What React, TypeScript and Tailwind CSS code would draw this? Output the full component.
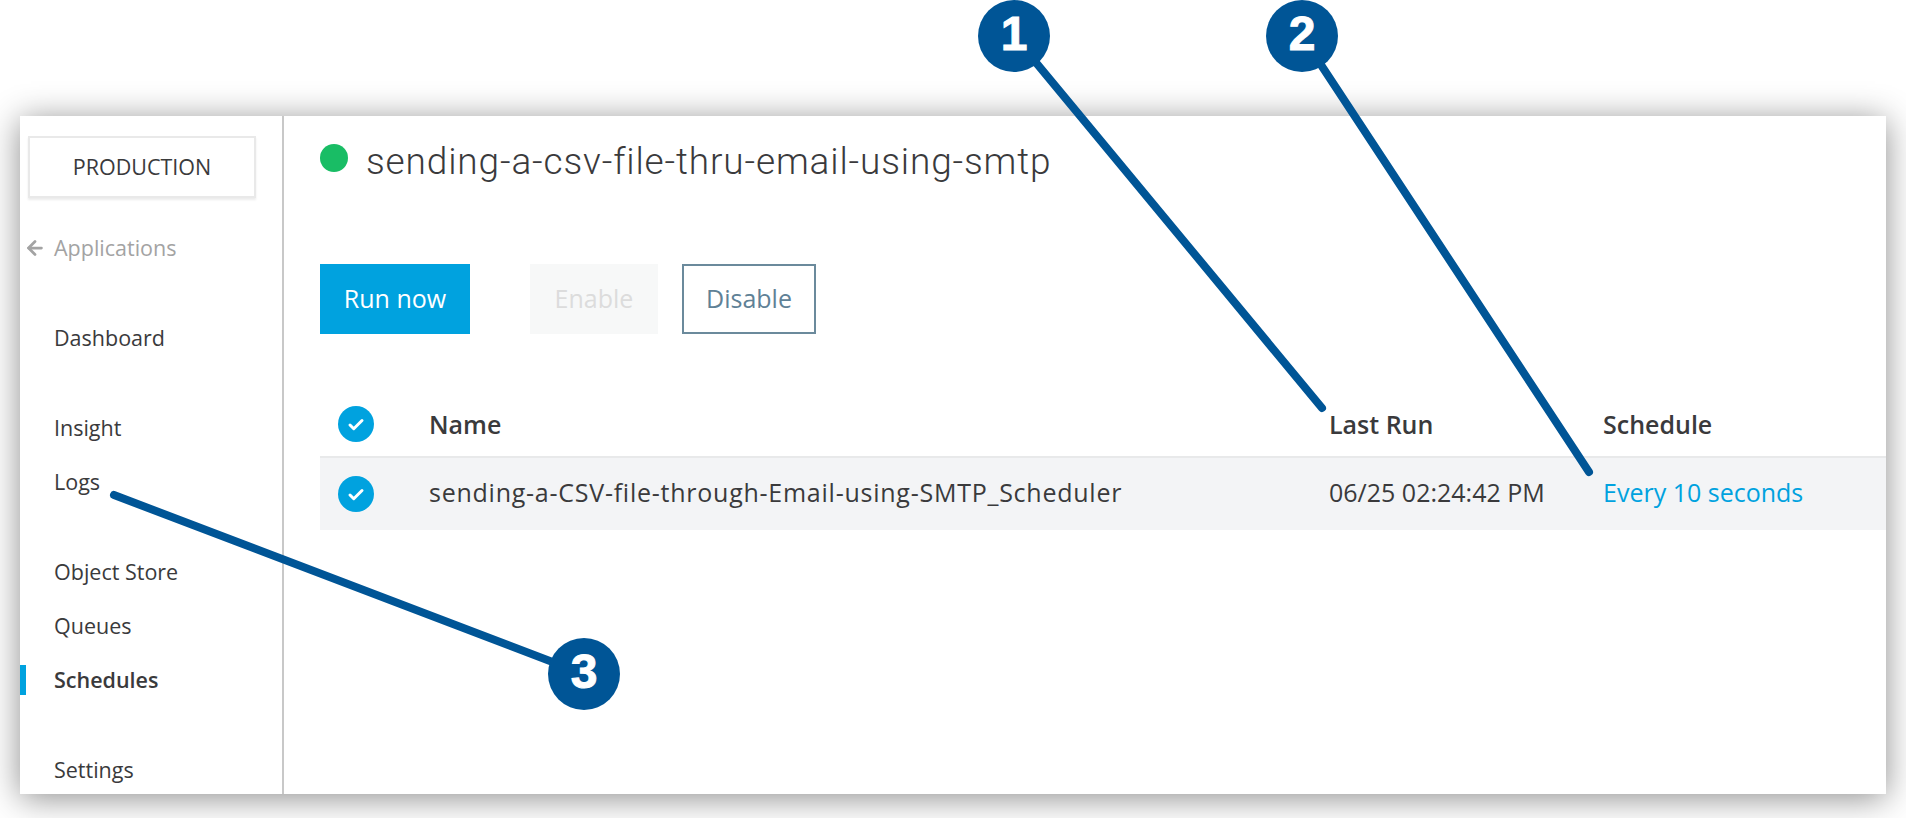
import { Check, ArrowLeft } from 'lucide-react'

const callouts = [
  { n: '1', cx: 1014, cy: 36, x2: 1322, y2: 408 },
  { n: '2', cx: 1302, cy: 36, x2: 1589, y2: 472 },
  { n: '3', cx: 584, cy: 674, x2: 114, y2: 495 },
]

function NavItem({ label }: { label: string }) {
  return (
    <div className="h-[54px] flex items-center pl-[34px] text-[21.5px] text-[#3a3a3c]">
      {label}
    </div>
  )
}

function RoundCheck() {
  return (
    <div className="w-9 h-9 rounded-full bg-[#00a2df] flex items-center justify-center">
      <Check className="w-[18px] h-[18px] text-white mt-0.5" strokeWidth={4} />
    </div>
  )
}

export default function App() {
  return (
    <div className="relative w-[1906px] h-[818px] overflow-hidden bg-white pt-[116px] pl-[20px] font-['Open_Sans',sans-serif]">
      <div className="flex w-[1866px] h-[678px] bg-white overflow-hidden shadow-[0_4px_32px_rgba(0,0,0,0.45)]">
        <aside className="w-[264px] shrink-0 border-r-2 border-[#c8c8c8]">
          <div className="mt-5 ml-2 w-[228px] h-[62px] flex items-center justify-center border-2 border-[#e9e9e9] shadow-[0_2px_2px_rgba(0,0,0,0.08)] text-[21.5px] text-[#3a3a3c]">
            PRODUCTION
          </div>
          <div className="mt-[23px] h-[54px] flex items-center pl-[4px] gap-[8px] text-[21.5px] text-[#a3a3a3]">
            <ArrowLeft className="w-[22px] h-[22px]" strokeWidth={3} />
            <span>Applications</span>
          </div>
          <div className="mt-9">
            <NavItem label="Dashboard" />
          </div>
          <div className="mt-9">
            <NavItem label="Insight" />
            <NavItem label="Logs" />
          </div>
          <div className="mt-9">
            <NavItem label="Object Store" />
            <NavItem label="Queues" />
            <div className="h-[54px] flex items-center">
              <div className="w-1.5 h-[30px] bg-[#00a2df]" />
              <span className="pl-[28px] text-[21.5px] font-semibold text-[#3a3a3c]">Schedules</span>
            </div>
          </div>
          <div className="mt-9">
            <NavItem label="Settings" />
          </div>
        </aside>

        <main className="flex-1 pl-9">
          <div className="flex items-center h-[84px] gap-[18px]">
            <div className="w-7 h-7 rounded-full bg-[#19bd65]" />
            <h1 className="font-['Roboto',sans-serif] font-light text-[37px] tracking-[0.85px] text-[#3a3a3c] mt-[8px]">
              sending-a-csv-file-thru-email-using-smtp
            </h1>
          </div>

          <div className="mt-16 flex text-[25px]">
            <button className="w-[150px] h-[70px] bg-[#00a2df] text-white">Run now</button>
            <button className="ml-[60px] w-[128px] h-[70px] bg-[#f7f8f8] text-[#dcdcdc]">Enable</button>
            <button className="ml-6 w-[134px] h-[70px] border-2 border-[#6b8a9c] text-[#5f8196]">Disable</button>
          </div>

          <div className="mt-[58px] text-[25px] text-[#3a3a3c]">
            <div className="grid grid-cols-[109px_900px_274px_1fr] items-center h-[66px] border-b-2 border-[#e8e9ea] font-semibold">
              <div className="pl-[18px]">
                <RoundCheck />
              </div>
              <div className="pt-0.5">Name</div>
              <div className="pt-0.5">Last Run</div>
              <div className="pt-0.5">Schedule</div>
            </div>
            <div className="grid grid-cols-[109px_900px_274px_1fr] items-center h-[72px] bg-[#f3f4f6]">
              <div className="pl-[18px]">
                <RoundCheck />
              </div>
              <div className="tracking-[0.75px] pb-0.5">sending-a-CSV-file-through-Email-using-SMTP_Scheduler</div>
              <div className="pb-0.5">06/25 02:24:42 PM</div>
              <div className="pb-0.5 text-[#00a2df]">Every 10 seconds</div>
            </div>
          </div>
        </main>
      </div>

      {/* callout lines + numbers sit on top of the screenshot */}
      <svg className="absolute inset-0 pointer-events-none" width={1906} height={818}>
        {callouts.map((c) => (
          <line key={c.n} x1={c.cx} y1={c.cy} x2={c.x2} y2={c.y2} stroke="#005596" strokeWidth={8} strokeLinecap="round" />
        ))}
      </svg>
      {callouts.map((c) => (
        <div
          key={c.n}
          className="absolute w-[72px] h-[72px] rounded-full bg-[#005596] flex items-center justify-center text-white font-bold text-[48px] pb-[4px] [-webkit-text-stroke:1px_white] font-['Liberation_Sans',sans-serif]"
          style={{ left: c.cx - 36, top: c.cy - 36 }}
        >
          {c.n}
        </div>
      ))}
    </div>
  )
}
